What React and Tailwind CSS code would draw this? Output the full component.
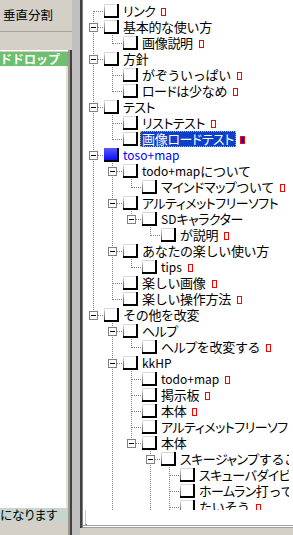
import React from 'react';

const RAW = [
  { t: 'リンク', l: 0, m: 'red' },
  { t: '基本的な使い方', l: 0, exp: true },
  { t: '画像説明', l: 1, m: 'red' },
  { t: '方針', l: 0, exp: true },
  { t: 'がぞういっぱい', l: 1, m: 'red' },
  { t: 'ロードは少なめ', l: 1, m: 'red' },
  { t: 'テスト', l: 0, exp: true },
  { t: 'リストテスト', l: 1, m: 'red' },
  { t: '画像ロードテスト', l: 1, m: 'blue', sel: true },
  { t: 'toso+map', l: 0, exp: true, blue: true },
  { t: 'todo+mapについて', l: 1, exp: true },
  { t: 'マインドマップついて', l: 2, m: 'red' },
  { t: 'アルティメットフリーソフト', l: 1, exp: true },
  { t: 'SDキャラクター', l: 2, exp: true },
  { t: 'が説明', l: 3, m: 'red' },
  { t: 'あなたの楽しい使い方', l: 1, exp: true },
  { t: 'tips', l: 2, m: 'red' },
  { t: '楽しい画像', l: 1, m: 'red' },
  { t: '楽しい操作方法', l: 1, m: 'red' },
  { t: 'その他を改変', l: 0, exp: true },
  { t: 'ヘルプ', l: 1, exp: true },
  { t: 'ヘルプを改変する', l: 2, m: 'red' },
  { t: 'kkHP', l: 1, exp: true },
  { t: 'todo+map', l: 2, m: 'red' },
  { t: '掲示板', l: 2, m: 'red' },
  { t: '本体', l: 2, m: 'red' },
  { t: 'アルティメットフリーソフト', l: 2 },
  { t: '本体', l: 2, exp: true },
  { t: 'スキージャンプすること', l: 3, exp: true },
  { t: 'スキューバダイビング', l: 4 },
  { t: 'ホームラン打ってみた', l: 4 },
  { t: 'たいそう', l: 4, m: 'red' },
  { t: 'ジョギング', l: 4 },
  { t: 'スノーボード', l: 3 },
  { t: 'その他', l: 1 },
];

function build(items) {
  return items.map((it, i) => {
    const hasNextAt = (lvl) => {
      for (let j = i + 1; j < items.length; j++) {
        if (items[j].l < lvl) return false;
        if (items[j].l === lvl) return true;
      }
      return false;
    };
    const anc = [];
    for (let a = 0; a < it.l; a++) anc.push(hasNextAt(a));
    return { ...it, anc, next: hasNextAt(it.l), first: i === 0 };
  });
}

function Runs({ t, lh }) {
  const parts = [];
  const re = /([\x00-\x7f]+)|([\u30a0-\u30ff]+)|([^\x00-\x7f\u30a0-\u30ff]+)/g;
  let m;
  let k = 0;
  while ((m = re.exec(t))) {
    if (m[1]) {
      parts.push(
        <span key={k++} className={`inline-block align-top text-[12px] ${lh}`}>
          {m[1]}
        </span>
      );
    } else if (m[2]) {
      parts.push(
        <span key={k++} className={`inline-block align-top text-[13px] tracking-[-0.5px] [font-feature-settings:'palt'] ${lh}`}>
          {m[2]}
        </span>
      );
    } else {
      parts.push(
        <span key={k++} className={`inline-block align-top text-[13px] tracking-[-0.3px] ${lh}`}>
          {m[3]}
        </span>
      );
    }
  }
  return <>{parts}</>;
}

function AncCell({ cont }) {
  return (
    <svg width="19" height="16" className="block shrink-0" shapeRendering="crispEdges">
      {cont && <line x1="9.5" y1="0" x2="9.5" y2="16" stroke="#808080" strokeDasharray="1 1" />}
    </svg>
  );
}

function OwnCell({ first, next, exp }) {
  return (
    <svg width="20" height="16" className="block shrink-0" shapeRendering="crispEdges">
      <line x1="9.5" y1={first ? 8 : 0} x2="9.5" y2={next ? 16 : 9} stroke="#808080" strokeDasharray="1 1" />
      <line x1="10" y1="8.5" x2="20" y2="8.5" stroke="#808080" strokeDasharray="1 1" />
      {exp && (
        <g>
          <rect x="5.5" y="4.5" width="8" height="8" fill="#ffffff" stroke="#808080" />
          <line x1="7" y1="8.5" x2="12" y2="8.5" stroke="#000000" />
        </g>
      )}
    </svg>
  );
}

function Box({ blue }) {
  return (
    <svg width="15" height="14" className="mt-[1px] block shrink-0 self-start" shapeRendering="crispEdges">
      <defs>
        <linearGradient id="lg" x1="0" y1="0" x2="0" y2="1">
          <stop offset="0" stopColor="#f0f0f0" />
          <stop offset="1" stopColor="#303030" />
        </linearGradient>
        <linearGradient id="bg" x1="0" y1="0" x2="0" y2="1">
          <stop offset="0" stopColor="#5a5aff" />
          <stop offset="1" stopColor="#0000f0" />
        </linearGradient>
      </defs>
      <rect x="0" y="0" width="15" height="14" fill={blue ? 'url(#bg)' : '#ffffff'} />
      {!blue && <rect x="0" y="0" width="13" height="1" fill="#d8d8d8" />}
      {!blue && <rect x="0" y="0" width="1" height="14" fill="url(#lg)" />}
      <rect x="13" y="0" width="2" height="14" fill="#000000" />
      <rect x="0" y="12" width="15" height="2" fill="#000000" />
    </svg>
  );
}

function Row({ r }) {
  return (
    <div className="flex h-4 items-start whitespace-nowrap">
      {r.anc.map((c, i) => (
        <AncCell key={i} cont={c} />
      ))}
      <OwnCell first={r.first} next={r.next} exp={r.exp} />
      <Box blue={r.blue} />
      {r.sel ? (
        <span className="ml-[2px] block h-4 shrink-0 border border-dotted border-[#f0b020] bg-[#0c40c8] px-[1px] leading-[14px] text-white">
          <Runs t={r.t} lh="leading-[14px]" />
        </span>
      ) : (
        <span className={`ml-[2px] block h-4 shrink-0 px-[2px] leading-4 ${r.blue ? 'text-[#0000ff]' : 'text-black'}`}>
          <Runs t={r.t} lh="leading-4" />
        </span>
      )}
      {r.m === 'red' && <span className="ml-[4px] mt-[5px] h-[8px] w-[5px] shrink-0 border border-[#ff0000] bg-white" />}
      {r.m === 'blue' && <span className="ml-[4px] mt-[5px] h-[8px] w-[5px] shrink-0 border border-[#ff0000] bg-[#0000ff]" />}
    </div>
  );
}

export default function App() {
  const rows = build(RAW);
  return (
    <div className="flex h-[535px] w-[293px] overflow-hidden bg-[#d4d0c8] text-[12px] text-black font-['Noto_Sans_CJK_JP',sans-serif]">
      {/* left panel */}
      <div className="flex w-[72px] shrink-0 flex-col">
        <div className="flex h-[31px] items-center pl-[3px] text-[12.5px]">垂直分割</div>
        <div className="h-px bg-[#a6a29a]" />
        <div className="h-[18px]" />
        <div className="flex min-h-0 flex-1">
          <div className="flex w-[68px] flex-col">
            <div className="h-px bg-white" />
            <div className="h-px bg-[#d4d0c8]" />
            <div className="flex h-[14px] justify-end overflow-hidden whitespace-nowrap bg-[#6cc070] pr-[8px] text-[12px] font-bold leading-[14px] text-white">
              <span className="shrink-0">ドラッグアンドドロップ</span>
            </div>
            <div className="h-[442px] border-r-2 border-[#e4e0d8] bg-white" />
            <div className="h-[13px] overflow-hidden whitespace-nowrap bg-[#c6d6ce] text-[12.5px] leading-[13px] [font-feature-settings:'palt']">になります</div>
            <div className="flex-1" />
          </div>
          <div className="w-[2px] bg-[#9c9890]" />
          <div className="w-[2px] bg-[#404040]" />
        </div>
      </div>
      {/* splitter */}
      <div className="w-[8px] shrink-0 bg-[#c0c0c0]" />
      <div className="flex w-[2px] shrink-0 flex-col">
        <div className="h-[528px] bg-[#404040]" />
      </div>
      <div className="flex w-px shrink-0 flex-col">
        <div className="h-[528px] bg-[#808080]" />
      </div>
      {/* right panel */}
      <div className="flex w-[210px] shrink-0 flex-col">
        <div className="flex h-[510px] bg-white">
          <div className="w-[206px] overflow-hidden pl-px pt-[3px]">
            {rows.map((r, i) => (
              <Row key={i} r={r} />
            ))}
          </div>
        </div>
        <div className="flex h-[15px] bg-white">
          <div className="ml-[2px] w-[2px] border-b border-l border-b-[#808080] border-l-[#c8c8c8]" />
        </div>
        <div className="h-px bg-[#a0a0a0]" />
        <div className="h-px bg-white" />
        <div className="h-px bg-[#a0a0a0]" />
        <div className="flex-1 bg-[#d4d0c8]" />
      </div>
    </div>
  );
}
